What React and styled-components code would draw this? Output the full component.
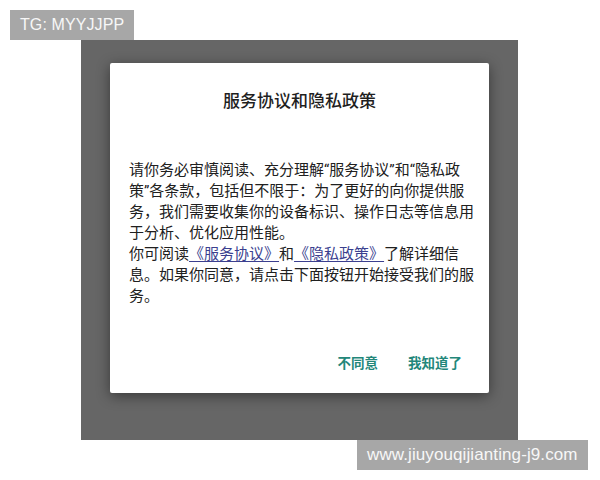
import React from "react";
import styled, { createGlobalStyle } from "styled-components";

const GlobalStyle = createGlobalStyle`
  html, body {
    margin: 0;
    padding: 0;
    background: #ffffff;
  }
  body {
    width: 600px;
    height: 480px;
    overflow: hidden;
    font-family: "Roboto", "Noto Sans CJK SC", sans-serif;
  }
`;

const Page = styled.div`
  display: flex;
  flex-direction: column;
  align-items: flex-start;
  padding-top: 10px;
`;

const Tag = styled.div`
  margin-left: ${(props) => props.left}px;
  height: 30px;
  padding: 0 ${(props) => props.pad}px;
  display: flex;
  align-items: center;
  background: #a7a7a7;
  color: #f7f7f7;
  font-family: "Liberation Sans", "Noto Sans", sans-serif;
  font-size: ${(props) => props.size}px;
  letter-spacing: 0.1px;
`;

const Backdrop = styled.div`
  margin-left: 81px;
  width: 437px;
  height: 400px;
  box-sizing: border-box;
  padding: 23px 0 0 29px;
  background: #666666;
`;

const Dialog = styled.div`
  width: 379px;
  height: 330px;
  box-sizing: border-box;
  background: #ffffff;
  border-radius: 2px;
  box-shadow: 0 3px 14px rgba(0, 0, 0, 0.45);
  display: flex;
  flex-direction: column;
  padding: 26px 24px 0 19px;
`;

const Title = styled.h2`
  margin: 0;
  text-align: center;
  padding-left: 5px;
  font-size: 17px;
  line-height: 24px;
  font-weight: 500;
  color: #1f1f1f;
`;

const Body = styled.p`
  margin: 47px 0 0;
  font-size: 15px;
  line-height: 21px;
  color: #202020;
  white-space: nowrap;
`;

const Link = styled.a`
  color: #3b3f8f;
  text-decoration: underline;
  text-underline-offset: 2px;
`;

const Actions = styled.div`
  margin-top: 45px;
  display: flex;
  justify-content: flex-end;
  gap: 30px;
  padding-right: 3px;
`;

const Action = styled.button`
  border: 0;
  background: none;
  padding: 0;
  font-family: "Noto Sans CJK SC", sans-serif;
  font-size: 13.5px;
  line-height: 20px;
  font-weight: 700;
  color: #23877a;
  cursor: pointer;
`;

export default function App() {
  return (
    <>
      <GlobalStyle />
      <Page>
        <Tag left={10} pad={10} size={16}>
          TG: MYYJJPP
        </Tag>
        <Backdrop>
          <Dialog>
            <Title>服务协议和隐私政策</Title>
            <Body>
              请你务必审慎阅读、充分理解“服务协议”和“隐私政
              <br />
              策”各条款，包括但不限于：为了更好的向你提供服
              <br />
              务，我们需要收集你的设备标识、操作日志等信息用
              <br />
              于分析、优化应用性能。
              <br />
              你可阅读<Link>《服务协议》</Link>和<Link>《隐私政策》</Link>了解详细信
              <br />
              息。如果你同意，请点击下面按钮开始接受我们的服
              <br />
              务。
            </Body>
            <Actions>
              <Action>不同意</Action>
              <Action>我知道了</Action>
            </Actions>
          </Dialog>
        </Backdrop>
        <Tag left={357} pad={10} size={17}>
          www.jiuyouqijianting-j9.com
        </Tag>
      </Page>
    </>
  );
}
